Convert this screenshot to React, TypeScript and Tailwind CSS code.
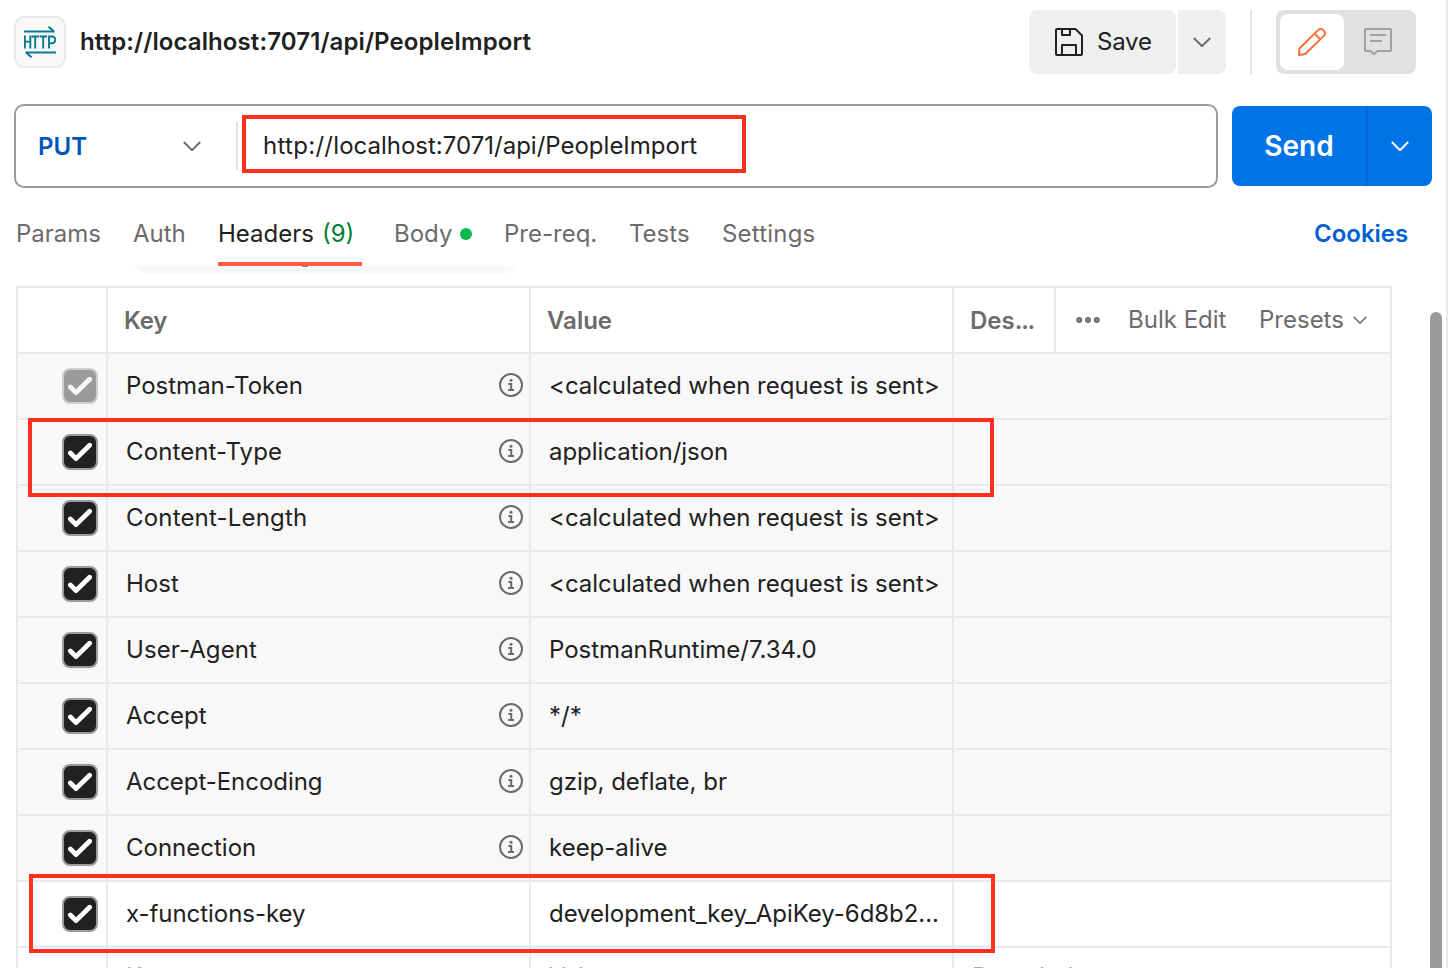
import React from "react";

type HeaderRow = { name: string; value: string; locked?: boolean; custom?: boolean; nameClass?: string; valueClass?: string };

const rows: HeaderRow[] = [
  { name: "Postman-Token", value: "<calculated when request is sent>", locked: true },
  { name: "Content-Type", value: "application/json", nameClass: "tracking-[0.12px]", valueClass: "tracking-[-0.04px]" },
  { name: "Content-Length", value: "<calculated when request is sent>", nameClass: "tracking-[0.18px]" },
  { name: "Host", value: "<calculated when request is sent>" },
  { name: "User-Agent", value: "PostmanRuntime/7.34.0", nameClass: "tracking-[0.08px]" },
  { name: "Accept", value: "*/*" },
  { name: "Accept-Encoding", value: "gzip, deflate, br", nameClass: "tracking-[-0.05px]" },
  { name: "Connection", value: "keep-alive" },
  { name: "x-functions-key", value: "development_key_ApiKey-6d8b2...", custom: true, nameClass: "tracking-[-0.05px]", valueClass: "tracking-[-0.05px]" },
];

function Chevron({ className = "", size = 18, weight = 1.9 }: { className?: string; size?: number; weight?: number }) {
  return (
    <svg width={size} height={size * 0.6} viewBox="0 0 18 10.8" fill="none" stroke="currentColor" strokeWidth={weight} className={className}>
      <path d="M.8 1 9 9.2 17.2 1" />
    </svg>
  );
}

function HttpIcon() {
  return (
    <div className="flex h-[52px] w-[52px] shrink-0 items-center justify-center rounded-[10px] border-2 border-[#e9e9e9] bg-[#f8f8f8]">
      <svg width="32" height="32" viewBox="0 0 32 32" fill="none" stroke="#047d8c" strokeWidth="2">
        <path d="M0 5.6H30.5M24.6 .8 30 5.6M32 26.4H1.5M7.6 31.2 2 26.4" />
        <path d="M.9 9.6V22.6M6.3 9.6V22.6M.9 15.6H6.3M7.6 10.5H15M11.2 10.5V22.6M15.6 10.5H23M19.2 10.5V22.6M25 22.6V10.5H28A3.2 3.2 0 0 1 28 17.2H25" strokeWidth="1.9" />
      </svg>
    </div>
  );
}

function SaveIcon() {
  return (
    <svg width="28" height="28" viewBox="0 0 28 28" fill="none" stroke="#212121" strokeWidth="2" strokeLinejoin="round">
      <path d="M2 1H20.5L27 7.5V26a1 1 0 0 1-1 1H2a1 1 0 0 1-1-1V2a1 1 0 0 1 1-1Z" />
      <path d="M7 1V7H15V1M7 27V17H21V27" />
    </svg>
  );
}

function PencilIcon() {
  return (
    <svg width="28" height="28" viewBox="0 0 28 28" fill="none" stroke="#ff6c37" strokeWidth="2" strokeLinejoin="round">
      <path d="M1 27 1.5 20.5 20.3 1.9A3.2 3.2 0 0 1 25 1.9L26 2.9A3.2 3.2 0 0 1 26 7.6L7.3 26 1 27Z" />
      <path d="M17 6 22 11" />
    </svg>
  );
}

function CommentIcon() {
  return (
    <svg width="28" height="28" viewBox="0 0 28 28" fill="none" stroke="#a0a0a0" strokeWidth="2" strokeLinejoin="round">
      <path d="M1.8 1H26.2a.8.8 0 0 1 .8.8V22.2a.8.8 0 0 1-.8.8H13.5L10 26.2 6.5 23H1.8a.8.8 0 0 1-.8-.8V1.8A.8.8 0 0 1 1.8 1Z" />
      <path d="M6 7H22M6 13H18" />
    </svg>
  );
}

function InfoIcon() {
  return (
    <svg width="24" height="24" viewBox="0 0 24 24" fill="none" stroke="#6b6b6b" strokeWidth="2" className="mb-0.5">
      <circle cx="12" cy="12" r="11" />
      <path d="M9.4 11H12.2V17M9 17H15" />
      <circle cx="12" cy="7.2" r="1.5" fill="#6b6b6b" stroke="none" />
    </svg>
  );
}

function Checkbox({ locked }: { locked?: boolean }) {
  return (
    <div className={`flex h-9 w-9 items-center justify-center rounded-lg border-2 ${locked ? "border-[#cfcfcf] bg-[#9b9b9b]" : "border-[#9b9b9b] bg-[#212121]"}`}>
      <svg width="26" height="20" viewBox="0 0 26 20" fill="none" stroke={locked ? "#f8f8f8" : "#ffffff"} strokeWidth="4.8" strokeLinecap="round" strokeLinejoin="round">
        <path d="M3.4 11 9 16.6 22.6 3.2" />
      </svg>
    </div>
  );
}

function Tab({ children, className = "" }: { children: React.ReactNode; className?: string }) {
  return <div className={`flex h-16 shrink-0 items-center whitespace-nowrap text-[#6b6b6b] ${className}`}>{children}</div>;
}

export default function App() {
  return (
    <div className="relative flex h-[968px] w-[1456px] overflow-hidden bg-white font-['Inter',sans-serif] text-2xl leading-8 text-[#212121]">
      <div className="flex h-full w-[1448px] flex-col border-r-2 border-[#e9e9e9]">
        <header className="flex h-[104px] shrink-0 items-start pt-[10px] pl-[14px]">
          <div className="flex h-16 w-[1015px] items-center gap-[14px]">
            <HttpIcon />
            <h1 className="whitespace-nowrap font-semibold tracking-[0.1px]">http://localhost:7071/api/PeopleImport</h1>
          </div>
          <button className="flex h-16 w-[147px] items-center gap-[14px] rounded-lg bg-[#efefef] pl-[26px]">
            <SaveIcon />
            <span className="tracking-[-0.2px]">Save</span>
          </button>
          <button className="ml-0.5 flex h-16 w-12 items-center justify-center rounded-r-lg bg-[#efefef] text-[#6b6b6b]">
            <Chevron />
          </button>
          <div className="ml-6 h-16 w-0.5 bg-[#e6e6e6]" />
          <div className="ml-6 flex h-16 w-[140px] rounded-lg bg-[#e1e1e1] p-1">
            <button className="flex h-14 w-16 items-center justify-center rounded-lg bg-white"><PencilIcon /></button>
            <button className="flex h-14 w-[68px] items-center justify-center"><CommentIcon /></button>
          </div>
        </header>

        <div className="flex h-[84px] shrink-0 items-center pl-[14px]">
          <div className="relative flex h-[84px] w-[1204px] items-center rounded-[10px] border-2 border-[#9b9b9b]">
            <div className="flex w-[220px] items-center justify-between pr-[35px] pl-[22px]">
              <span className="pt-0.5 font-semibold text-[#0053b8]">PUT</span>
              <Chevron className="text-[#6b6b6b]" />
            </div>
            <div className="h-12 w-0.5 bg-[#e1e1e1]" />
            <span className="ml-[25px] whitespace-nowrap"><span className="tracking-[0.3px]">http://</span>localhost:7071/api/PeopleImport</span>
            <div className="absolute top-[9px] left-[226px] h-[58px] w-[504px] border-4 border-[#ff2f1f]" />
          </div>
          <div className="ml-[14px] flex h-20 w-[200px] overflow-hidden rounded-lg bg-[#0073e6] text-white">
            <button className="w-[134px] text-[28px] font-semibold">Send</button>
            <button className="flex w-[66px] items-center justify-center border-l-2 border-[#0066d2]"><Chevron /></button>
          </div>
        </div>

        <nav className="flex h-[78px] shrink-0 items-start pt-[14px] pl-4">
          <Tab className="w-[117px]">Params</Tab>
          <Tab className="w-[85px]">Auth</Tab>
          <Tab className="mr-8 w-36 border-b-4 border-[#ff5c35] pt-1 text-[#212121]">
            Headers<span className="ml-2 text-[#007f31]">(9)</span>
          </Tab>
          <Tab className="w-[110px] gap-2">Body<span className="h-3 w-3 rounded-full bg-[#0cb84b]" /></Tab>
          <Tab className="w-[125px]">Pre-req.</Tab>
          <Tab className="w-[93px]">Tests</Tab>
          <Tab className="w-[592px] tracking-[0.2px]">Settings</Tab>
          <Tab className="font-semibold text-[#0061d1]!">Cookies</Tab>
        </nav>

        <div className="flex min-h-0 flex-1">
          <div className="w-[1430px] pl-4">
            <div className="h-5">
              <div className="relative ml-28 h-2 w-[394px] overflow-hidden">
                <div className="absolute bottom-0 h-12 w-full rounded-full bg-[#f8f8f8]" />
                <span className="absolute left-[174px] h-px w-1.5 bg-[#8b8b8b]" />
              </div>
            </div>
            <div className="w-[1376px] border-2 border-[#e9e9e9]">
              <div className="flex h-[66px] border-b-2 border-[#e9e9e9] font-semibold text-[#6b6b6b]">
                <div className="w-[90px] border-r-2 border-[#e9e9e9]" />
                <div className="flex w-[423px] items-center border-r-2 border-[#e9e9e9] pt-0.5 pl-4 tracking-[-0.2px]">Key</div>
                <div className="flex w-[423px] items-center border-r-2 border-[#e9e9e9] pt-0.5 pl-4">Value</div>
                <div className="flex w-[102px] items-center border-r-2 border-[#e9e9e9] pt-0.5 pl-4">Des<span className="tracking-[-1.2px]">...</span></div>
                <div className="flex flex-1 items-center pl-5 font-normal">
                  <svg width="24" height="8" viewBox="0 0 24 8" fill="#a0a0a0" stroke="#6b6b6b" strokeWidth="2">
                    <circle cx="3.2" cy="4" r="2" /><circle cx="12" cy="4" r="2" /><circle cx="20.8" cy="4" r="2" />
                  </svg>
                  <span className="ml-7 w-[131px] whitespace-nowrap">Bulk Edit</span>
                  <span className="w-[94px]">Presets</span>
                  <Chevron size={14} weight={2} />
                </div>
              </div>
              {rows.map((row) => (
                <div key={row.name} className={`flex h-[66px] border-b-2 border-[#e9e9e9] ${row.custom ? "bg-white" : "bg-[#f8f8f8]"}`}>
                  <div className="flex w-[90px] items-center justify-end border-r-2 border-[#e9e9e9] pr-2">
                    <Checkbox locked={row.locked} />
                  </div>
                  <div className="flex w-[423px] items-center justify-between border-r-2 border-[#e9e9e9] pr-1.5 pl-[18px]">
                    <span className={`whitespace-nowrap ${row.nameClass ?? ""}`}>{row.name}</span>
                    {!row.custom && <InfoIcon />}
                  </div>
                  <div className={`flex w-[423px] items-center border-r-2 border-[#e9e9e9] pl-[18px] whitespace-nowrap ${row.valueClass ?? ""}`}>{row.value}</div>
                </div>
              ))}
              <div className="flex h-[66px] text-[#a6a6a6]">
                <div className="w-[90px] border-r-2 border-[#e9e9e9]" />
                <div className="flex w-[423px] items-start border-r-2 border-[#e9e9e9] pt-[13px] pl-[18px]">Key</div>
                <div className="flex w-[423px] items-start border-r-2 border-[#e9e9e9] pt-[13px] pl-[18px]">Value</div>
                <div className="flex items-start pt-[13px] pl-[18px]">Description</div>
              </div>
            </div>
          </div>
          <div className="mt-[46px] w-3 rounded-t-full bg-[#9b9b9b]" />
        </div>
      </div>
      <div className="absolute top-[418px] left-7 h-[79px] w-[966px] border-4 border-[#ff2f1f]" />
      <div className="absolute top-[874px] left-[29px] h-[79px] w-[966px] border-4 border-[#ff2f1f]" />
    </div>
  );
}
